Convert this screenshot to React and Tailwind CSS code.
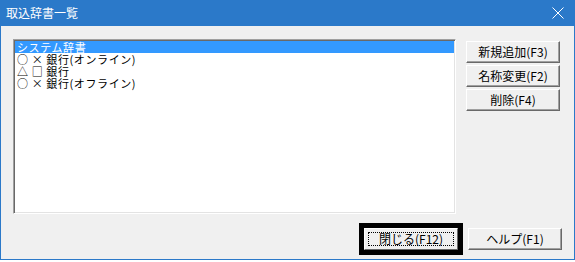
import React from "react";

const items = [
  "システム辞書",
  "○ × 銀行(オンライン)",
  "△ □ 銀行",
  "○ × 銀行(オフライン)",
];

function WinButton({ label }) {
  return (
    <button
      type="button"
      className="w-[94px] h-[22px] flex items-center justify-center bg-[#f0f0f0] border border-t-white border-l-white border-r-[#696969] border-b-[#696969] shadow-[inset_-1px_-1px_0_#a0a0a0] text-[12px] leading-[12px] text-black"
    >
      {label}
    </button>
  );
}

export default function App() {
  return (
    <div
      className="w-[575px] h-[262px] bg-white"
      style={{ fontFamily: '"Noto Sans CJK JP", "Liberation Sans", sans-serif' }}
    >
      <div className="w-[575px] h-[260px] bg-[#2b79c9] px-px pb-px flex flex-col">
        {/* Title bar */}
        <div className="h-[26px] flex items-center justify-between pl-[5px] pr-[10px]">
          <span className="text-white text-[12px] leading-[12px]">取込辞書一覧</span>
          <svg width="12" height="12" viewBox="0 0 12 12">
            <path d="M0.5 0.5 L11.5 11.5 M11.5 0.5 L0.5 11.5" stroke="#fff" strokeWidth="1" />
          </svg>
        </div>

        {/* Body */}
        <div className="flex-1 bg-[#f0f0f0] pl-[12px] pt-[13px] pr-[12px] flex flex-col">
          <div className="flex">
            {/* List box */}
            <div className="w-[443px] h-[175px] bg-white border border-t-[#a0a0a0] border-l-[#a0a0a0] border-r-white border-b-white shadow-[inset_1px_1px_0_#696969,inset_-1px_-1px_0_#e3e3e3] pt-px pl-px pr-px">
              {items.map((t, i) => (
                <div
                  key={t}
                  className={`h-[12px] flex items-center pl-[2px] text-[11px] leading-[12px] tracking-[0.6px] whitespace-pre ${
                    i === 0 ? "bg-[#3399ff] text-white" : "text-black"
                  }`}
                >
                  {t}
                </div>
              ))}
            </div>

            {/* Right buttons */}
            <div className="ml-[10px] mt-[2px] flex flex-col gap-[2px]">
              <WinButton label="新規追加(F3)" />
              <WinButton label="名称変更(F2)" />
              <WinButton label="削除(F4)" />
            </div>
          </div>

          {/* Bottom buttons */}
          <div className="mt-[9px] flex items-center justify-end gap-[5px]">
            <div className="border-[5px] border-black">
              <button
                type="button"
                className="relative w-[94px] h-[22px] flex items-center justify-center bg-[#f0f0f0] border border-t-white border-l-white border-r-[#696969] border-b-[#696969] text-[12px] leading-[12px] text-black"
              >
                <span className="absolute inset-[3px] border border-dotted border-black" />
                <span className="relative">閉じる(F12)</span>
              </button>
            </div>
            <WinButton label="ヘルプ(F1)" />
          </div>
        </div>
      </div>
    </div>
  );
}
